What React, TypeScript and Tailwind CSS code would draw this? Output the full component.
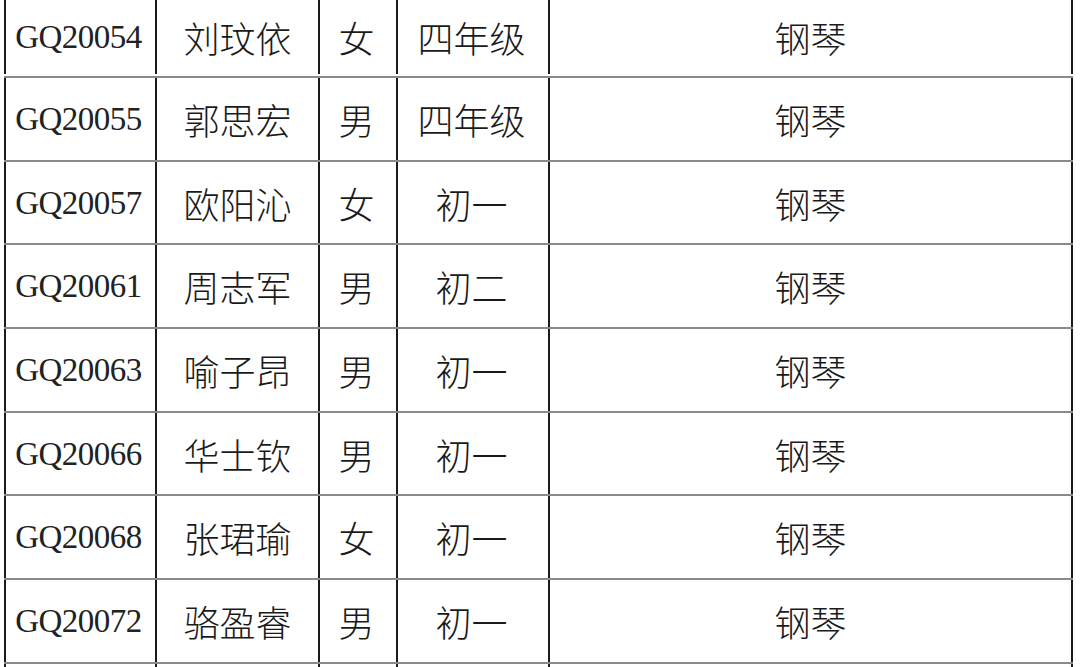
import React from "react";

const rows = [
  ["GQ20054", "刘玟依", "女", "四年级", "钢琴"],
  ["GQ20055", "郭思宏", "男", "四年级", "钢琴"],
  ["GQ20057", "欧阳沁", "女", "初一", "钢琴"],
  ["GQ20061", "周志军", "男", "初二", "钢琴"],
  ["GQ20063", "喻子昂", "男", "初一", "钢琴"],
  ["GQ20066", "华士钦", "男", "初一", "钢琴"],
  ["GQ20068", "张珺瑜", "女", "初一", "钢琴"],
  ["GQ20072", "骆盈睿", "男", "初一", "钢琴"],
  ["", "", "", "", ""],
];

export default function App() {
  return (
    <div className="w-[1080px] h-[667px] overflow-hidden bg-white text-[#1a1a1a] font-['Noto_Sans_CJK_SC','Noto_Sans',sans-serif]">
      <div className="ml-[4px] flex flex-col w-fit">
        {rows.map((r, i) => (
          <div
            key={i}
            className={`flex w-fit border-b-2 border-[#8a8a8a] ${i === 0 ? "h-[78px] pb-[2px]" : "h-[83.7px]"}`}
          >
            <div className="w-[151px] border-l-2 border-[#1a1a1a] flex items-center justify-center pr-[4px] pt-[1px] text-[33px] tracking-[-0.5px] leading-none text-[#222] font-['Liberation_Serif','Noto_Sans_CJK_SC',serif]">
              {r[0]}
            </div>
            <div className="w-[163px] border-l-2 border-[#1a1a1a] flex items-center justify-center text-[36px] leading-none font-light">
              {r[1]}
            </div>
            <div className="w-[78px] border-l-2 border-[#1a1a1a] flex items-center justify-center pr-[3px] text-[36px] leading-none font-light">
              {r[2]}
            </div>
            <div className="w-[152px] border-l-2 border-[#1a1a1a] flex items-center justify-center pr-[3px] text-[36px] leading-none font-light">
              {r[3]}
            </div>
            <div className="w-[525px] border-l-2 border-r-2 border-[#1a1a1a] flex items-center justify-center text-[36px] leading-none font-light">
              {r[4]}
            </div>
          </div>
        ))}
      </div>
    </div>
  );
}
